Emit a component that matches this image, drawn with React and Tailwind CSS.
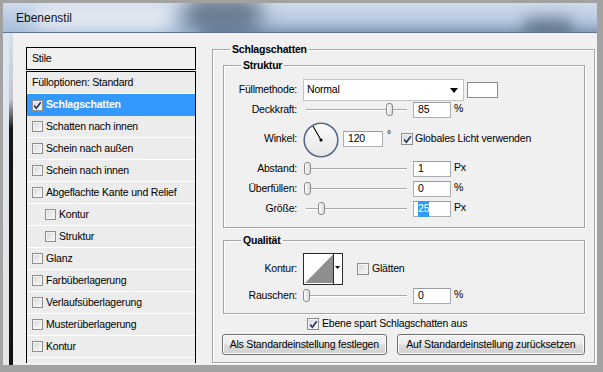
import React from 'react';

const styleList = [
  { label: 'Fülloptionen: Standard', noBox: true },
  { label: 'Schlagschatten', checked: true, active: true },
  { label: 'Schatten nach innen' },
  { label: 'Schein nach außen' },
  { label: 'Schein nach innen' },
  { label: 'Abgeflachte Kante und Relief' },
  { label: 'Kontur', sub: true },
  { label: 'Struktur', sub: true },
  { label: 'Glanz' },
  { label: 'Farbüberlagerung' },
  { label: 'Verlaufsüberlagerung' },
  { label: 'Musterüberlagerung' },
  { label: 'Kontur' },
];

const CheckBox = ({ checked, small }) => (
  <span
    className={`flex shrink-0 items-center justify-center border border-[#8e8f8f] bg-[linear-gradient(135deg,#d4d6da,#fbfbfb)] shadow-[inset_0_0_0_1px_#f4f4f4] ${
      small ? 'h-[11px] w-[11px]' : 'h-[12px] w-[12px]'
    }`}
  >
    {checked && (
      <svg width="9" height="9" viewBox="0 0 9 9">
        <path d="M1.2 4.6 L3.4 7.2 L7.8 1.2" fill="none" stroke="#26396a" strokeWidth="1.7" />
      </svg>
    )}
  </span>
);

const Label = ({ children }) => <span className="w-[73px] shrink-0 text-right">{children}</span>;

const Field = ({ value, selected, w = 'w-[38px]' }) => (
  <span className={`flex h-[16px] ${w} shrink-0 items-center border border-[#abadb3] border-t-[#9a9ca3] bg-white pl-[4px]`}>
    {selected ? <span className="bg-[#3399ff] text-white">{value}</span> : value}
  </span>
);

const Slider = ({ thumb }) => (
  <span className="relative h-[14px] w-[106px] shrink-0">
    <span className="absolute left-[3px] right-[2px] top-[6px] h-[2px] border-t border-b border-t-[#a9a9a9] border-b-white" />
    <span
      className={`absolute top-0 h-[13px] w-[7px] rounded-[3px] border border-[#8a8a8a] bg-[linear-gradient(90deg,#ffffff,#d9d9d9)] ${thumb}`}
    />
  </span>
);

const Unit = ({ children }) => <span className="-mt-[3px] ml-[3px]">{children}</span>;

const Group = ({ title, className, children }) => (
  <div className={`relative border border-[#a5a5a5] shadow-[inset_1px_1px_0_#ffffff,1px_1px_0_#ffffff] ${className}`}>
    <span className="absolute -top-[7px] left-[17px] bg-[#f0f0f0] px-[2px] font-bold leading-[12px]">{title}</span>
    {children}
  </div>
);

export default function App() {
  return (
    <div className="h-[372px] w-[603px] bg-[#a2a2a2] pb-[7px] pl-[3px] pr-[6px] pt-[3px] font-['Liberation_Sans',Arial,sans-serif] text-[10.5px] tracking-[-0.2px] text-black">
      <div className="flex h-full flex-col">
        {/* Glass title bar */}
        <div className="relative flex h-[30px] shrink-0 items-center overflow-hidden border-b border-[#62768f] bg-[linear-gradient(180deg,#cfdbea_0%,#b8cbe1_55%,#a8bed8_100%)] pl-[13px]">
          <span className="absolute left-[30px] top-[4px] h-[24px] w-[140px] rounded-full bg-white/60 blur-[8px]" />
          <span className="absolute left-[180px] top-[-8px] h-[38px] w-[80px] rounded-full bg-[#22344c]/55 blur-[10px]" />
          <span className="absolute left-[200px] top-[24px] h-[12px] w-[400px] bg-[#3f5470]/35 blur-[4px]" />
          <span className="absolute left-[520px] top-[14px] h-[18px] w-[50px] rounded-full bg-[#26364b]/45 blur-[7px]" />
          <span className="relative text-[12px] tracking-normal text-[#111]">Ebenenstil</span>
        </div>

        <div className="flex flex-1">
          {/* Window frame */}
          <div className="flex w-[10px] shrink-0">
            <span className="w-[6px] bg-[linear-gradient(180deg,#dde6f0,#e4e4e4)]" />
            <span className="w-[4px] bg-[linear-gradient(180deg,#d8e0ea_0%,#c0c6cc_20%,#161616_29%,#111_100%)]" />
          </div>

          <div className="flex flex-1 items-start bg-[#f0f0f0]">
            {/* Styles list */}
            <div className="ml-[13px] mt-[14px] w-[170px]">
              <div className="flex h-[23px] items-center border border-black bg-[#f0f0f0] pl-[5px]">Stile</div>
              <div className="mt-[1px] h-[292px] border border-b-0 border-black bg-[#ececec]">
                {styleList.map((s, i) => (
                  <div
                    key={i}
                    className={`flex h-[22px] items-center gap-[3px] ${
                      s.active ? 'bg-[#3399ff] font-bold text-white' : 'border-b border-white'
                    } ${s.sub ? 'pl-[18px]' : 'pl-[5px]'}`}
                  >
                    {!s.noBox && <CheckBox small checked={s.checked} />}
                    <span>{s.label}</span>
                  </div>
                ))}
              </div>
            </div>

            {/* Drop shadow settings */}
            <Group title="Schlagschatten" className="ml-[16px] mt-[16px] h-[314px] w-[383px] pl-[10px] pr-[9px] pt-[15px]">
              <Group title="Struktur" className="h-[163px] pt-[13px]">
                <div className="flex h-[22px] items-center">
                  <Label>Füllmethode:</Label>
                  <span className="relative ml-[6px] flex h-[22px] w-[161px] items-center border border-[#c3c3c3] bg-white pl-[3px]">
                    Normal
                    <svg className="absolute right-[5px] top-[8px]" width="8" height="5" viewBox="0 0 8 5">
                      <path d="M0 0 H8 L4 5 Z" fill="#000" />
                    </svg>
                  </span>
                  <span className="ml-[3px] h-[16px] w-[31px] border border-[#8c8c8c] bg-white" />
                </div>
                <div className="flex h-[18px] items-center">
                  <Label>Deckkraft:</Label>
                  <span className="ml-[6px] flex items-center">
                    <Slider thumb="left-[83px]" />
                    <span className="ml-[4px]"><Field value="85" /></span>
                    <Unit>%</Unit>
                  </span>
                </div>
                <div className="flex h-[40px] items-center">
                  <Label>Winkel:</Label>
                  <span className="ml-[6px] flex items-center">
                    <svg className="mt-[2px]" width="36" height="36" viewBox="0 0 36 36">
                      <defs>
                        <linearGradient id="dial" x1="0" y1="0" x2="0" y2="1">
                          <stop offset="0" stopColor="#fbfbfb" />
                          <stop offset="1" stopColor="#e6e6e6" />
                        </linearGradient>
                      </defs>
                      <circle cx="18" cy="18" r="16.8" fill="url(#dial)" stroke="#5a6a8b" strokeWidth="1.6" />
                      <line x1="18" y1="18" x2="10" y2="4.2" stroke="#000" strokeWidth="1.1" />
                      <circle cx="18" cy="18" r="1.6" fill="#000" />
                    </svg>
                    <span className="ml-[4px]"><Field value="120" w="w-[40px]" /></span>
                    <span className="-mt-[8px] ml-[4px] w-[14px]">°</span>
                    <CheckBox checked />
                    <span className="ml-[2px]">Globales Licht verwenden</span>
                  </span>
                </div>
                <div className="flex h-[20px] items-center">
                  <Label>Abstand:</Label>
                  <span className="ml-[6px] flex items-center">
                    <Slider thumb="left-[1px]" />
                    <span className="ml-[4px]"><Field value="1" /></span>
                    <Unit>Px</Unit>
                  </span>
                </div>
                <div className="flex h-[20px] items-center">
                  <Label>Überfüllen:</Label>
                  <span className="ml-[6px] flex items-center">
                    <Slider thumb="left-[1px]" />
                    <span className="ml-[4px]"><Field value="0" /></span>
                    <Unit>%</Unit>
                  </span>
                </div>
                <div className="flex h-[20px] items-center">
                  <Label>Größe:</Label>
                  <span className="ml-[6px] flex items-center">
                    <Slider thumb="left-[15px]" />
                    <span className="ml-[4px]"><Field value="25" selected /></span>
                    <Unit>Px</Unit>
                  </span>
                </div>
              </Group>

              <Group title="Qualität" className="mt-[12px] h-[74px] pt-[12px]">
                <div className="flex h-[32px] items-center">
                  <Label>Kontur:</Label>
                  <svg className="ml-[6px]" width="40" height="32" viewBox="0 0 40 32">
                    <rect x="0.5" y="0.5" width="39" height="31" fill="#fff" stroke="#2a2a2a" />
                    <path d="M2 30 L30 1.5 L30 30 Z" fill="#8e8e8e" />
                    <line x1="30.5" y1="0" x2="30.5" y2="32" stroke="#2a2a2a" />
                    <path d="M32 13 H37 L34.5 16 Z" fill="#000" />
                  </svg>
                  <span className="ml-[14px]"><CheckBox /></span>
                  <span className="ml-[3px]">Glätten</span>
                </div>
                <div className="flex h-[22px] items-center">
                  <Label>Rauschen:</Label>
                  <span className="ml-[6px] flex items-center">
                    <Slider thumb="left-0" />
                    <span className="ml-[4px]"><Field value="0" /></span>
                    <Unit>%</Unit>
                  </span>
                </div>
              </Group>

              <div className="flex h-[20px] items-center pl-[84px]">
                <CheckBox checked />
                <span className="ml-[3px]">Ebene spart Schlagschatten aus</span>
              </div>

              <div className="-ml-[1px] flex gap-[10px]">
                {['Als Standardeinstellung festlegen', 'Auf Standardeinstellung zurücksetzen'].map((b, i) => (
                  <button
                    key={b}
                    className={`flex h-[21px] items-center justify-center rounded-[3px] border border-[#707070] bg-[linear-gradient(180deg,#f3f3f3_0%,#ebebeb_48%,#dddddd_52%,#cfcfcf_100%)] shadow-[inset_0_0_0_1px_#fbfbfb] ${
                      i === 0 ? 'w-[165px]' : 'w-[189px]'
                    }`}
                  >
                    {b}
                  </button>
                ))}
              </div>
            </Group>
          </div>
        </div>
      </div>
    </div>
  );
}
